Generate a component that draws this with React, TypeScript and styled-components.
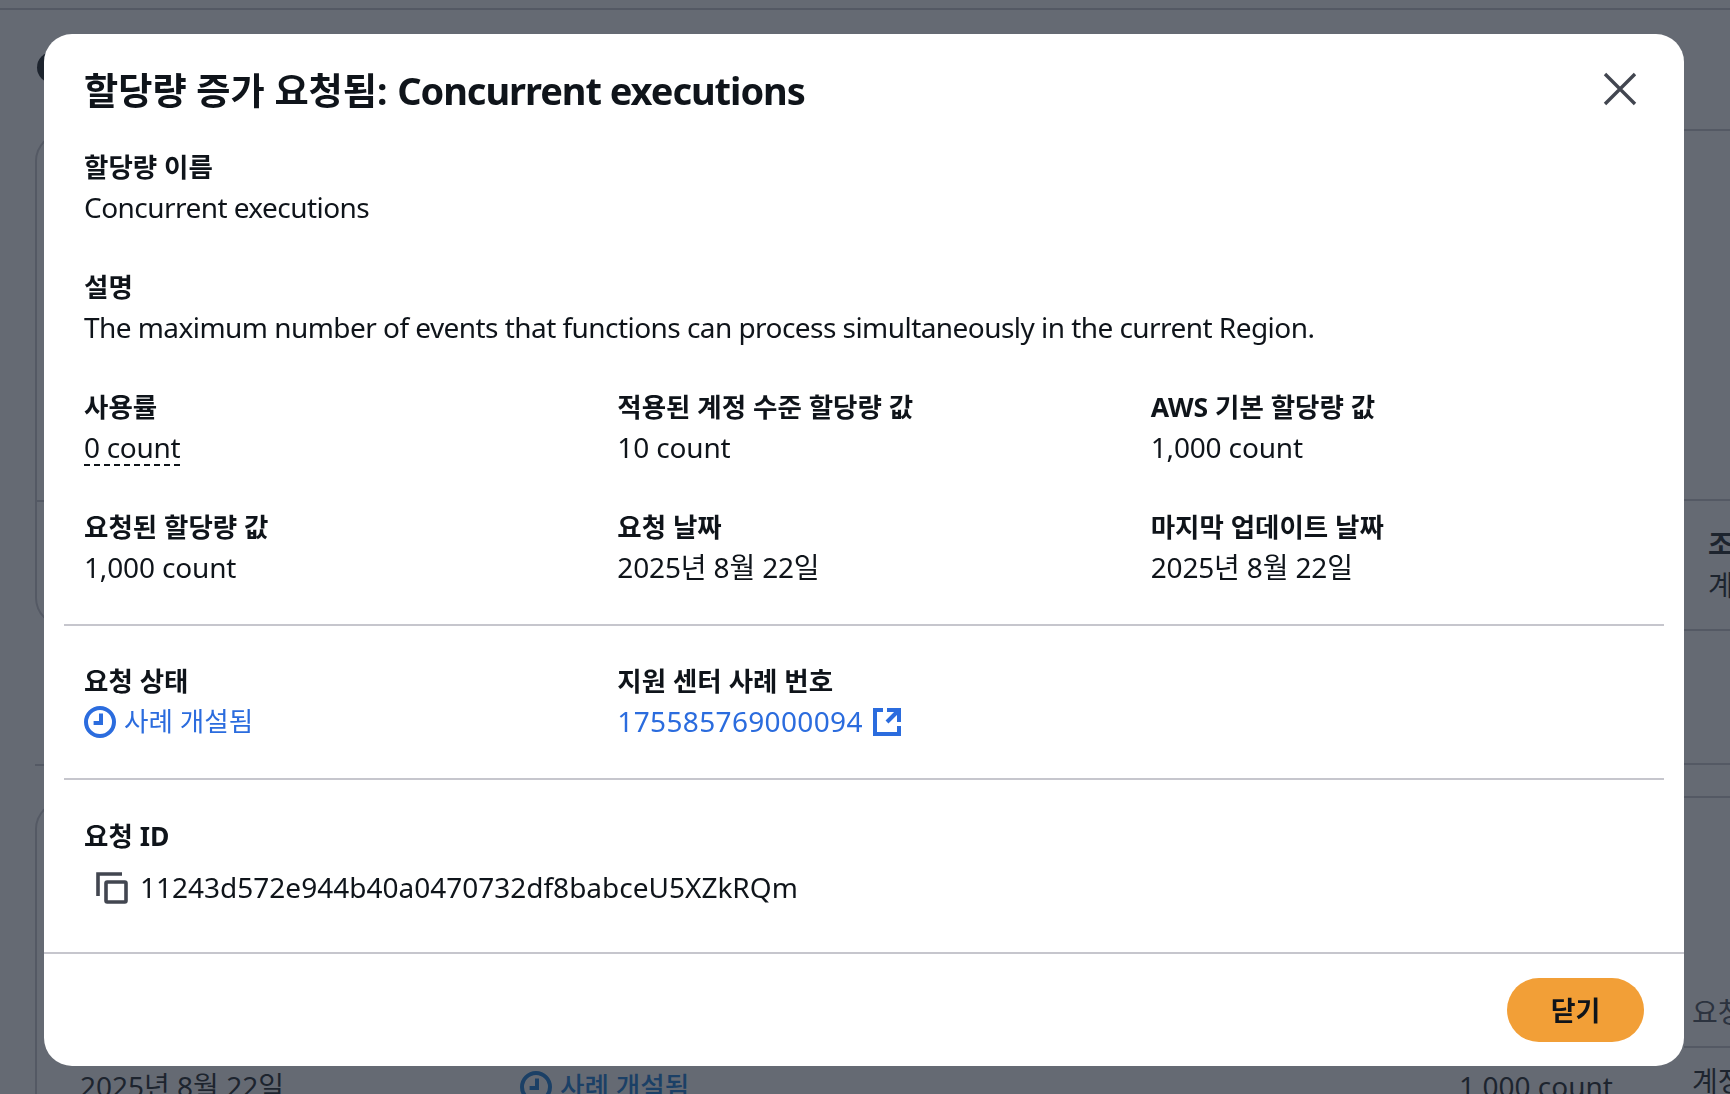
import React from 'react';
import styled, { createGlobalStyle } from 'styled-components';

const GlobalStyle = createGlobalStyle`
  html, body {
    margin: 0;
    padding: 0;
    background: #ffffff;
  }
  body {
    font-family: "Noto Sans", "Noto Sans CJK KR", sans-serif;
    font-size: 28px;
    line-height: 41px;
    color: #0f141a;
  }
  * {
    box-sizing: border-box;
  }
`;

const borderColor = '#c6c6cd';
const linkColor = '#2b6cde';

/* page behind the dialog */
const Page = styled.div`
  height: 1094px;
  overflow: hidden;
  display: flex;
  flex-direction: column;
`;

const TopStrip = styled.div`
  height: 10px;
  flex: none;
  border-bottom: 2px solid ${borderColor};
`;

const Main = styled.div`
  flex: 1;
  display: grid;
  grid-template-columns: 1684px 46px;
  min-height: 0;
`;

const LeftPane = styled.div`
  padding-left: 35px;
  min-width: 0;
`;

const RightPane = styled.div`
  display: flex;
  flex-direction: column;
  overflow: hidden;
`;

const PageButton = styled.div`
  width: 200px;
  height: 31px;
  margin: 42px 0 0 2px;
  border-radius: 16px;
  background: #0f141a;
`;

const TopCard = styled.div`
  height: 493px;
  margin-top: 50px;
  border: 2px solid ${borderColor};
  border-right: none;
  border-radius: 28px 0 0 28px;
`;

const TopCardRow = styled.div`
  height: 367px;
  border-bottom: 2px solid ${borderColor};
`;

const PageRule = styled.div`
  height: 2px;
  margin-top: 138px;
  background: ${borderColor};
`;

const BottomCard = styled.div`
  height: 400px;
  margin-top: 35px;
  padding: 263px 0 0 43px;
  border: 2px solid ${borderColor};
  border-right: none;
  border-radius: 28px 0 0 0;
`;

const BottomCardRow = styled.div`
  display: grid;
  grid-template-columns: 440px 939px auto;
  white-space: nowrap;
`;

const PageStatus = styled.div`
  display: flex;
  align-items: center;
  gap: 8px;
  color: #0972d3;
  font-size: 26.6px;
  font-weight: 500;
`;

const SideRow = styled.div<{ $height: number; $inset?: number; $align?: string }>`
  height: ${({ $height }) => $height}px;
  flex: none;
  padding-left: ${({ $inset }) => $inset ?? 0}px;
  display: flex;
  flex-direction: column;
  justify-content: ${({ $align }) => $align ?? 'flex-start'};
  border-bottom: 2px solid ${borderColor};
  white-space: nowrap;
`;

const SideLabel = styled.div`
  font-weight: 700;
`;

const SideText = styled.div<{ $muted?: boolean; $low?: number }>`
  color: ${({ $muted }) => ($muted ? '#424650' : '#0f141a')};
  margin-top: ${({ $low }) => $low ?? 0}px;
  margin-bottom: ${({ $muted }) => ($muted ? 13 : 0)}px;
`;

/* dialog */
const Overlay = styled.div`
  position: fixed;
  inset: 0;
  padding: 34px 46px 28px 44px;
  background: rgba(35, 43, 55, 0.7);
  display: flex;
`;

const Modal = styled.div`
  flex: 1;
  display: flex;
  flex-direction: column;
  background: #ffffff;
  border-radius: 28px;
  overflow: hidden;
`;

const Header = styled.div`
  height: 88px;
  flex: none;
  padding: 31px 44px 0 40px;
  display: flex;
  justify-content: space-between;
  align-items: flex-start;
`;

const Title = styled.h1`
  margin: 0;
  font-size: 37.2px;
  line-height: 50px;
  font-weight: 700;
`;

const TitleLatin = styled.span`
  font-size: 38px;
  letter-spacing: -1.05px;
`;

const CloseButton = styled.button`
  width: 40px;
  height: 40px;
  margin: 4px 0 0;
  padding: 0;
  border: none;
  background: none;
  color: #424650;
  display: flex;
  align-items: center;
  justify-content: center;
`;

const Body = styled.div`
  flex: 1;
  padding: 0 20px;
`;

const Section = styled.div<{ $bordered?: boolean; $height: number; $pad: number }>`
  height: ${({ $height }) => $height}px;
  padding: ${({ $pad }) => $pad}px 20px 0;
  border-bottom: ${({ $bordered }) => ($bordered ? `2px solid ${borderColor}` : 'none')};
  display: flex;
  flex-direction: column;
  row-gap: 39px;
`;

const Columns = styled.div`
  display: grid;
  grid-template-columns: repeat(3, 1fr);
  column-gap: 40px;
  row-gap: 39px;
`;

const Label = styled.div`
  font-size: 26.5px;
  font-weight: 700;
`;

const Value = styled.div<{ $prose?: boolean }>`
  margin-top: -1px;
  font-weight: 400;
  letter-spacing: ${({ $prose }) => ($prose ? '-0.55px' : '-0.15px')};
`;

const Dashed = styled.span`
  display: inline-block;
  line-height: 33px;
  letter-spacing: -0.3px;
  border-bottom: 2px dashed #0f141a;
`;

const StatusLink = styled.div`
  display: flex;
  align-items: center;
  gap: 8px;
  margin-top: -1px;
  font-size: 26.6px;
  color: ${linkColor};
`;

const CaseLink = styled.a`
  display: flex;
  align-items: center;
  gap: 8px;
  margin-top: -1px;
  letter-spacing: 0.35px;
  color: ${linkColor};
`;

const CopyRow = styled.div`
  display: flex;
  align-items: center;
  gap: 12px;
  margin-top: 10px;
  padding-left: 12px;
  color: #0f141a;
`;

const CopyIcon = styled.svg`
  color: #424650;
  flex: none;
`;

const Footer = styled.div`
  height: 114px;
  flex: none;
  border-top: 2px solid ${borderColor};
  padding: 24px 40px 0;
  display: flex;
  justify-content: flex-end;
  align-items: flex-start;
`;

const CloseAction = styled.button`
  width: 137px;
  height: 64px;
  border: none;
  border-radius: 32px;
  background: #f29f37;
  color: #0f141a;
  font: 700 27px/41px "Noto Sans", "Noto Sans CJK KR", sans-serif;
`;

const ClockIcon: React.FC = () => (
  <svg width="32" height="32" viewBox="0 0 16 16" fill="none" stroke="currentColor" strokeWidth="2">
    <circle cx="8" cy="8" r="7" />
    <path d="M8.5 3.8v4.7H4.8" />
  </svg>
);

const ExternalIcon: React.FC = () => (
  <svg width="32" height="32" viewBox="0 0 16 16" fill="none" stroke="currentColor" strokeWidth="2">
    <path d="M14 8V2H8" />
    <path d="M14 2 8 8" />
    <path d="M6 2H2v12h12v-4" />
  </svg>
);

const App: React.FC = () => (
  <>
    <GlobalStyle />
    <Page>
      <TopStrip />
      <Main>
        <LeftPane>
          <PageButton />
          <TopCard>
            <TopCardRow />
          </TopCard>
          <PageRule />
          <BottomCard>
            <BottomCardRow>
              <div>2025년 8월 22일</div>
              <PageStatus>
                <ClockIcon />
                사례 개설됨
              </PageStatus>
              <div>1,000 count</div>
            </BottomCardRow>
          </BottomCard>
        </LeftPane>
        <RightPane>
          <SideRow $height={121} />
          <SideRow $height={370} />
          <SideRow $height={130} $inset={24} $align="center">
            <SideLabel>조정</SideLabel>
            <SideText>계정</SideText>
          </SideRow>
          <SideRow $height={134} />
          <SideRow $height={33} />
          <SideRow $height={250} $inset={8} $align="flex-end">
            <SideText $muted>요청</SideText>
          </SideRow>
          <SideRow $height={60} $inset={8}>
            <SideText $low={13}>계정</SideText>
          </SideRow>
        </RightPane>
      </Main>
    </Page>

    <Overlay>
      <Modal>
        <Header>
          <Title>
            할당량 증가 요청됨: <TitleLatin>Concurrent executions</TitleLatin>
          </Title>
          <CloseButton aria-label="닫기">
            <svg width="40" height="40" viewBox="0 0 40 40" fill="none" stroke="currentColor" strokeWidth="3.4">
              <path d="M5 5l30 30M35 5 5 35" />
            </svg>
          </CloseButton>
        </Header>
        <Body>
          <Section $bordered $height={504} $pad={25}>
            <div>
              <Label>할당량 이름</Label>
              <Value $prose>Concurrent executions</Value>
            </div>
            <div>
              <Label>설명</Label>
              <Value $prose>The maximum number of events that functions can process simultaneously in the current Region.</Value>
            </div>
            <Columns>
              <div>
                <Label>사용률</Label>
                <Value>
                  <Dashed>0 count</Dashed>
                </Value>
              </div>
              <div>
                <Label>적용된 계정 수준 할당량 값</Label>
                <Value>10 count</Value>
              </div>
              <div>
                <Label>AWS 기본 할당량 값</Label>
                <Value>1,000 count</Value>
              </div>
              <div>
                <Label>요청된 할당량 값</Label>
                <Value>1,000 count</Value>
              </div>
              <div>
                <Label>요청 날짜</Label>
                <Value>2025년 8월 22일</Value>
              </div>
              <div>
                <Label>마지막 업데이트 날짜</Label>
                <Value>2025년 8월 22일</Value>
              </div>
            </Columns>
          </Section>
          <Section $bordered $height={154} $pad={35}>
            <Columns>
              <div>
                <Label>요청 상태</Label>
                <StatusLink>
                  <ClockIcon />
                  사례 개설됨
                </StatusLink>
              </div>
              <div>
                <Label>지원 센터 사례 번호</Label>
                <CaseLink>
                  175585769000094
                  <ExternalIcon />
                </CaseLink>
              </div>
            </Columns>
          </Section>
          <Section $height={170} $pad={36}>
            <div>
              <Label>요청 ID</Label>
              <CopyRow>
                <CopyIcon width="32" height="32" viewBox="0 0 16 16" fill="none" stroke="currentColor" strokeWidth="1.8">
                  <path d="M1 12V1h12" />
                  <rect x="5" y="5" width="10" height="10" rx="0.6" />
                </CopyIcon>
                11243d572e944b40a0470732df8babceU5XZkRQm
              </CopyRow>
            </div>
          </Section>
        </Body>
        <Footer>
          <CloseAction>닫기</CloseAction>
        </Footer>
      </Modal>
    </Overlay>
  </>
);

export default App;
